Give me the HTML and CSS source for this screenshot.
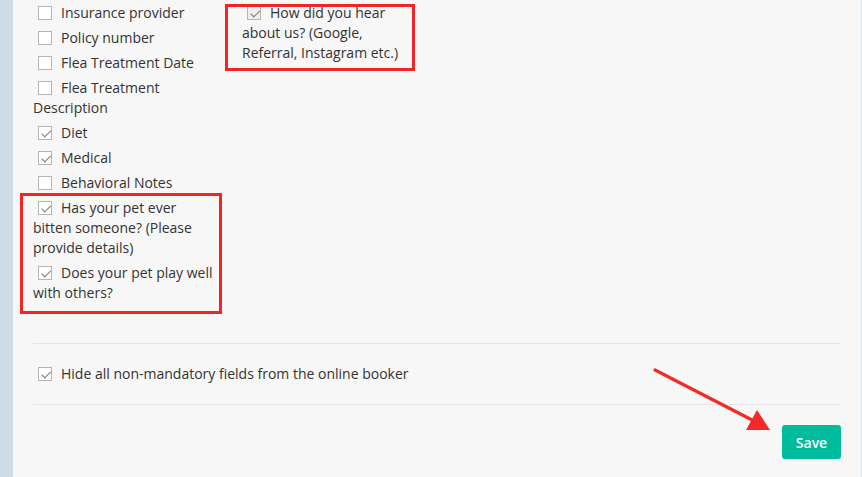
FILE: index.html
```html
<!DOCTYPE html>
<html>
<head>
<meta charset="utf-8">
<link rel="stylesheet" href="styles.css">
</head>
<body>
<div class="layout">
  <aside class="sidebar"></aside>
  <main class="main">
    <div class="fields">
      <ul class="col col-1">
        <li class="item"><span class="box"></span>Insurance provider</li>
        <li class="item"><span class="box"></span>Policy number</li>
        <li class="item"><span class="box"></span>Flea Treatment Date</li>
        <li class="item"><span class="box"></span>Flea Treatment Description</li>
        <li class="item"><span class="box checked"></span>Diet</li>
        <li class="item"><span class="box checked"></span>Medical</li>
        <li class="item"><span class="box"></span>Behavioral Notes</li>
        <li class="item"><span class="box checked"></span>Has your pet ever bitten someone? (Please provide details)</li>
        <li class="item"><span class="box checked"></span>Does your pet play well with others?</li>
      </ul>
      <ul class="col col-2">
        <li class="item"><span class="box checked shaded"></span>How did you hear about us? (Google, Referral, Instagram etc.)</li>
      </ul>
    </div>
    <hr class="sep sep-top">
    <div class="item hide-row"><span class="box checked"></span>Hide all non-mandatory fields from the online booker</div>
    <hr class="sep">
    <div class="actions">
      <button class="save">Save</button>
    </div>

    <div class="annot annot-1"></div>
    <div class="annot annot-2"></div>
    <svg class="arrow" width="862" height="477" viewBox="0 0 862 477">
      <line x1="655" y1="370" x2="756" y2="422" stroke="#f32a2a" stroke-width="3.2" stroke-linecap="round"/>
      <polygon points="770,430 757,410 746,430" fill="#f32a2a"/>
    </svg>
  </main>
</div>
</body>
</html>
```

FILE: styles.css
```css
* { box-sizing: border-box; }
html, body {
  margin: 0;
  padding: 0;
  height: 100%;
}
body {
  background: #f7f7f7;
  font-family: "Open Sans", "DejaVu Sans", sans-serif;
  font-size: 14px;
  color: #333;
}
.layout {
  display: flex;
  min-height: 477px;
  border-right: 1px solid #dbe3ea;
}
.sidebar {
  width: 13px;
  flex: none;
  background: #d0dce6;
}
.main {
  flex: 1;
  padding: 3px 20px 0 20px;
}
.fields {
  display: grid;
  grid-template-columns: 184px 176px;
  column-gap: 25px;
}
.col {
  list-style: none;
  margin: 0;
  padding: 0;
}
.item {
  line-height: 20px;
  margin-bottom: 5px;
}
.box {
  display: inline-block;
  width: 14px;
  height: 14px;
  border: 1px solid #b5b5b5;
  background: #fff;
  margin: 0 9px 0 5px;
  vertical-align: -2px;
  position: relative;
}
.box.shaded { background: #eeeeee; }
.box.checked::after {
  content: "";
  position: absolute;
  left: 2px;
  top: 1px;
  width: 8px;
  height: 4px;
  border-left: 1.5px solid #7a7a7a;
  border-bottom: 1.5px solid #7a7a7a;
  transform: rotate(-45deg) translate(-1px, 2px);
}
.sep {
  border: 0;
  border-top: 1px solid #e4e4e4;
  margin: 0;
}
.sep-top { margin-top: 35px; }
.hide-row {
  margin: 20px 0 20px;
}
.actions {
  display: flex;
  justify-content: flex-end;
  padding-top: 20px;
}
.save {
  width: 59px;
  height: 34px;
  border: 0;
  border-radius: 3px;
  background: #00bb9c;
  color: #fff;
  font-family: "Open Sans", sans-serif;
  font-size: 14px;
  font-weight: 600;
  padding: 0;
}
.annot {
  position: absolute;
  border: 3px solid #f42424;
}
.annot-1 { left: 225px; top: 4px; width: 190px; height: 67px; }
.annot-2 { left: 20px; top: 193px; width: 202px; height: 121px; }
.arrow {
  position: absolute;
  left: 0;
  top: 0;
  pointer-events: none;
}
```
